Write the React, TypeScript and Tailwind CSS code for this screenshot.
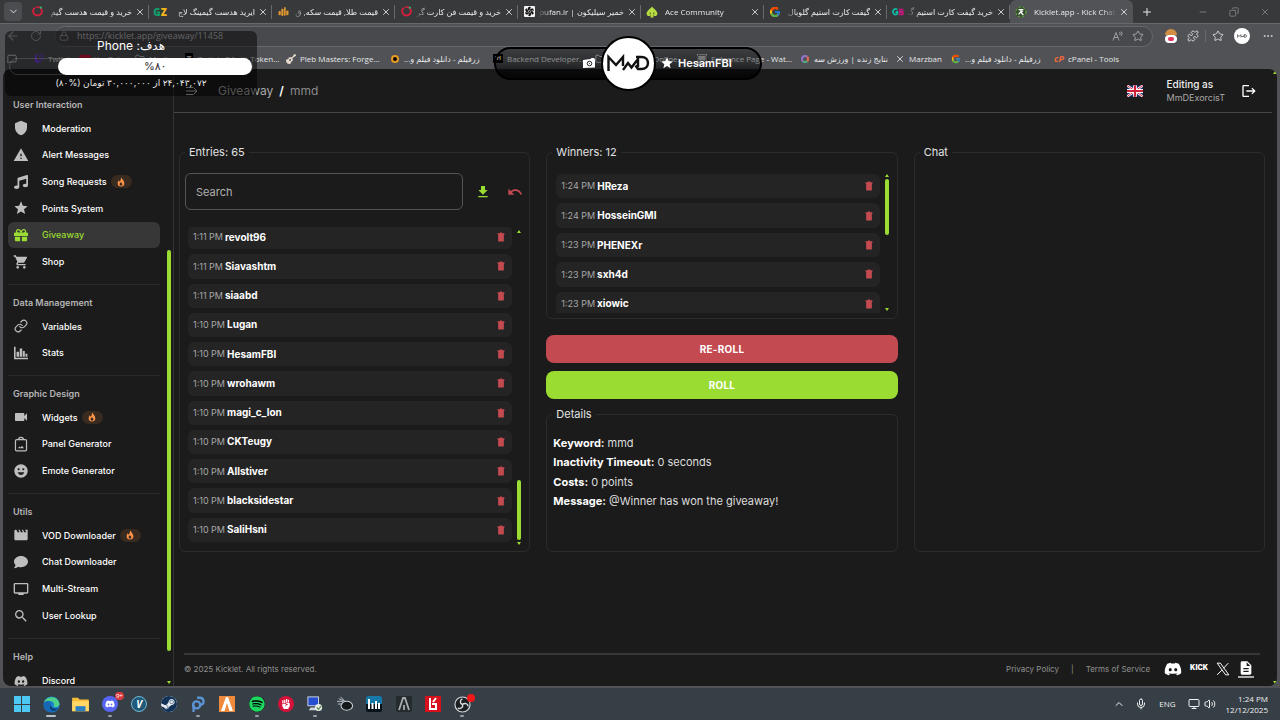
import type { ComponentType, ReactNode } from "react";
import {
  MdShield, MdWarning, MdStar, MdShoppingCart, MdVideocam, MdMovie, MdTv, MdSearch,
  MdDownload, MdUndo, MdLogout, MdDescription, MdEmojiEmotions,
} from "react-icons/md";
import { FaMusic, FaGift, FaComment, FaDiscord, FaSpotify, FaFistRaised, FaGuitar } from "react-icons/fa";
import { FcGoogle } from "react-icons/fc";
import { SiSteam, SiTwitch, SiYoutube } from "react-icons/si";
import {
  ChevronDown, ChevronUp, X, Plus, Minus, Copy, ArrowLeft, RotateCw, Lock, Star, Puzzle, Mic, Volume2,
  Link as LinkIcon, Monitor, Ellipsis, Folder, MessageSquare,
} from "lucide-react";

type IconType = ComponentType<{ className?: string }>;

const CircleLogo = ({ className = "" }) => (
  <svg viewBox="0 0 20 20" className={className}>
    <path d="M5 3a8 8 0 1 0 10 0" fill="none" stroke="#d51f3c" strokeWidth="3.4" />
    <path d="M7 3a8 8 0 0 1 8 0" fill="none" stroke="#d51f3c" strokeWidth="2.4" />
    <circle cx="16" cy="3" r="2" fill="#2bb673" />
  </svg>
);

const GzLogo = () => (
  <span className="text-[10px] font-black leading-none">
    <span className="text-[#12a06e]">G</span>
    <span className="text-[#f2b51c]">Z</span>
  </span>
);

const GsLogo = () => (
  <svg viewBox="0 0 20 20" className="size-3" fill="none" strokeWidth="3">
    <path d="M9 6a4.500 4.500 0 1 0 0 7v-3H6" stroke="#12b5a0" />
    <path d="M19 6h-6v4h5v4h-7" stroke="#c2187a" />
  </svg>
);

const CoinsLogo = ({ className = "" }) => (
  <svg viewBox="0 0 20 20" className={className} fill="#e0962f">
    <rect x="1" y="9" width="4" height="8" rx="1.5" />
    <rect x="6" y="5" width="4" height="13" rx="1.5" />
    <rect x="11" y="2" width="3" height="16" rx="1.5" />
    <rect x="15" y="8" width="4" height="9" rx="1.5" />
  </svg>
);

const FanLogo = ({ className = "" }) => (
  <svg viewBox="0 0 20 20" className={className}>
    <rect width="20" height="20" rx="2" fill="#f5f5f5" />
    <g fill="#111">
      {[0, 60, 120, 180, 240, 300].map((a) => (
        <path key={a} d="M10 9C6 8 6 4 9 1.500c2.500 0 3.500 1 3.500 2C10.500 5 10 6.500 11 8.500z" transform={`rotate(${a} 10 10)`} />
      ))}
    </g>
    <circle cx="10" cy="10" r="2" fill="#111" stroke="#f5f5f5" />
  </svg>
);

const SpadeLogo = ({ className = "" }) => (
  <svg viewBox="0 0 20 20" className={className}>
    <path d="M10 1C7 5 1 8 1 13c0 4 5 5 7.500 2.500L7 19h6l-1.500-3.500C14 18 19 17 19 13c0-5-6-8-9-12z" fill="#b7dd45" />
    <path d="M7 11v3M13 11v3" stroke="#39400f" strokeWidth="1.500" />
  </svg>
);

const KickletLogo = ({ className = "" }) => (
  <svg viewBox="0 0 20 20" className={className}>
    <circle cx="10" cy="10" r="9" fill="#36502f" />
    <circle cx="10" cy="10" r="8.500" fill="none" stroke="#6db33f" strokeWidth="1.500" strokeDasharray="4 3" />
    <path d="M6 6h8M10 6v3l-4 5M9 10l5 5M13 8l-3 3" stroke="#fff" strokeWidth="2" fill="none" />
  </svg>
);

const MmdMark = ({ className = "" }) => (
  <svg viewBox="0 0 44 20" className={className} fill="none" stroke="#111" strokeWidth="2.400">
    <path d="M2.500 18V4l7.500 8 7-8v9" />
    <path d="M17 17l5-7 3.500 4.500L32 6v8" />
    <path d="M30 4h5.500c4 0 6.500 2.500 6.500 6s-2.500 6-6.500 6H32l-2.500-3.500" />
  </svg>
);

const BarsLogo = ({ className = "" }) => (
  <svg viewBox="0 0 22 22" className={className} fill="currentColor">
    <path d="M0 1h2.500v17.500H22V21H0z" />
    <path d="M4 9h4v8H4zM9 4h4v13H9zM14 8h3v9h-3zM18 12h3v5h-3z" />
  </svg>
);

const PanelIcon = ({ className = "" }) => (
  <svg viewBox="0 0 24 26" className={className} fill="none" stroke="currentColor" strokeWidth="2">
    <rect x="3" y="6" width="18" height="18" rx="2" />
    <path d="M8 6c0-5 8-5 8 0" />
    <path d="M7 20l2.500-3 2 1.500 2-2.500 3.500 4z" fill="currentColor" stroke="none" />
  </svg>
);

const MenuIcon = ({ className = "" }) => (
  <svg viewBox="0 0 24 18" className={className} fill="none" stroke="currentColor" strokeWidth="1.800">
    <path d="M0 2h15M0 9h22M0 16h15M16 3l6 6-6 6" />
  </svg>
);

const TrashIcon = ({ className = "" }) => (
  <svg viewBox="0 0 14 16" className={className} fill="currentColor">
    <path d="M1 1.500h3.500L5.500 0h3l1 1.500H13V4H1zM2 4h10v10.500a1.500 1.500 0 0 1-1.500 1.500h-7A1.500 1.500 0 0 1 2 14.500z" />
  </svg>
);

const FlameIcon = ({ className = "" }) => (
  <svg viewBox="0 0 24 24" className={className} fill="currentColor">
    <path
      fillRule="evenodd"
      d="M13 1c1 4 7 7 7 14a8 8 0 0 1-16 0c0-4 2-6 3-8 0 2 .5 4 2 4C12 9 11 4 13 1zm-1 11c-1 2-3.500 3-3.500 5.500a3.500 3.500 0 0 0 7 0c0-2.500-2.500-3-3.500-5.500z"
    />
  </svg>
);

const CameraIcon = ({ className = "" }) => (
  <svg viewBox="0 0 26 24" className={className}>
    <path d="M1 6l15-2 2-2h5l2 3v16L1 22z" fill="#fff" />
    <circle cx="14" cy="13" r="4.500" fill="none" stroke="#222" strokeWidth="2" />
    <circle cx="14" cy="13" r="1" fill="#222" />
  </svg>
);

const XLogo = ({ className = "" }) => (
  <svg viewBox="0 0 24 24" className={className} fill="none" stroke="currentColor" strokeWidth="1.700">
    <path d="M2 2h5.500L22 22h-5.500zM21 2l-8.500 9M10 14l-8 8" />
  </svg>
);

const UkFlag = () => (
  <svg viewBox="0 0 34 24" className="h-3 w-4">
    <rect width="34" height="24" fill="#20306f" />
    <path d="M0 0l34 24M34 0L0 24" stroke="#fff" strokeWidth="5" />
    <path d="M0 0l34 24M34 0L0 24" stroke="#d0203a" strokeWidth="2" />
    <path d="M17 0v24M0 12h34" stroke="#fff" strokeWidth="8" />
    <path d="M17 0v24M0 12h34" stroke="#d0203a" strokeWidth="4.500" />
  </svg>
);

type Tab = { icon: ReactNode; title: string; rtl?: boolean; active?: boolean };
const tabs: Tab[] = [
  { icon: <CircleLogo className="size-[11px]" />, title: "خرید و قیمت هدست گیم", rtl: true },
  { icon: <GzLogo />, title: "ایرید هدست گیمینگ لاج", rtl: true },
  { icon: <CoinsLogo className="size-[11px]" />, title: "قیمت طلا, قیمت سکه, ق", rtl: true },
  { icon: <CircleLogo className="size-[11px]" />, title: "خرید و قیمت فن کارت گر", rtl: true },
  { icon: <FanLogo className="size-[11px]" />, title: "خمیر سیلیکون | pufan.ir", rtl: true },
  { icon: <SpadeLogo className="size-3" />, title: "Ace Community" },
  { icon: <FcGoogle className="size-3" />, title: "گیفت کارت استیم گلوبال", rtl: true },
  { icon: <GsLogo />, title: "خرید گیفت کارت استیم گ", rtl: true },
  { icon: <KickletLogo className="size-3" />, title: "Kicklet.app - Kick Chatb", active: true },
];

function TabStrip() {
  return (
    <div className="flex h-[23px] items-center bg-[#37393b] pl-1">
      <button aria-label="Tab actions" className="flex h-[19px] w-[18px] shrink-0 items-center justify-center rounded bg-[#4b4d50]">
        <ChevronDown className="size-[11px]" />
      </button>
      <div className="ml-1 flex h-full min-w-0 flex-1 items-center">
        {tabs.map((t, i) => (
          <div
            key={i}
            className={`flex h-full max-w-[123px] min-w-0 flex-1 items-center gap-[3px] pl-[5px] ${t.active ? "rounded-t-md bg-[#515357]" : ""}`}
          >
            <span className="flex w-3 shrink-0 justify-center">{t.icon}</span>
            <span
              dir={t.rtl ? "rtl" : "ltr"}
              className={`min-w-0 flex-1 overflow-hidden text-[8px] whitespace-nowrap ${t.rtl ? "mask-l-from-85%" : "pl-1 mask-r-from-85%"}`}
            >
              {t.title}
            </span>
            <button aria-label="Close tab" className="shrink-0"><X className="size-2.5" /></button>
            <span className={`h-3.5 w-px shrink-0 ${t.active ? "" : "bg-[#66686b]"}`} />
          </div>
        ))}
        <button aria-label="New tab" className="ml-2"><Plus className="size-3" /></button>
      </div>
      <div className="flex w-[82px] shrink-0 justify-between pr-[10px] text-[#85878a]">
        <Minus className="size-2.5" />
        <Copy className="size-2.5 -scale-x-100" />
        <X className="size-2.5" />
      </div>
    </div>
  );
}

function Toolbar() {
  return (
    <div className="flex h-[25px] items-center border-t border-[#66686c] bg-[#505256] pr-1.5 pl-1.5 text-[#a5a7aa]">
      <button aria-label="Back"><ArrowLeft className="size-3.5" /></button>
      <button aria-label="Refresh" className="ml-2.5"><RotateCw className="size-3" /></button>
      <div className="ml-3 flex h-[21px] min-w-0 flex-1 items-center gap-2 rounded-full border border-[#66686c] bg-[#48494d] px-1">
        <Lock className="size-2.5" />
        <input aria-label="Address" defaultValue="https://kicklet.app/giveaway/11458" className="min-w-0 flex-1 bg-transparent text-[9px] text-[#c4c5c8] outline-none" />
        <svg viewBox="0 0 22 20" className="h-2.5 w-3" fill="none" stroke="currentColor" strokeWidth="1.800">
          <path d="M1 19L7 3l6 16M3 13h8M14 2q3 3 0 6M17 1q5 4 0 9" />
        </svg>
        <Star className="mr-1 size-3" />
      </div>
      <span className="ml-3 flex flex-col items-center">
        <span className="h-1.5 w-3 rounded-t-full bg-[#d28e42]" />
        <span className="flex h-2 w-3 items-center justify-center rounded-sm bg-white"><span className="h-1 w-1.5 rounded-full bg-[#e3345f]" /></span>
      </span>
      <Puzzle className="ml-2.5 size-3 text-[#d2d3d5]" />
      <span className="ml-1.5 h-3 w-px bg-[#66686c]" />
      <Star className="ml-1.5 size-3 text-[#d2d3d5]" />
      <span className="ml-2.5 flex size-4 items-center justify-center rounded-full bg-white"><MmdMark className="h-1.5 w-2.5" /></span>
      <Ellipsis className="ml-3 size-3 text-[#d2d3d5]" />
    </div>
  );
}

type Bookmark = { icon: ReactNode; label: string; width: string; rtl?: boolean };
const bookmarks: Bookmark[] = [
  { icon: <SiTwitch className="size-2.5 text-[#7b3fe4]" />, label: "Twitch", width: "w-[46px]" },
  { icon: <SiYoutube className="size-3 text-[#d9183b]" />, label: "YouTube", width: "w-[55px]" },
  { icon: <Folder className="size-2.5" />, label: "Media", width: "w-[49px]" },
  { icon: <b className="bg-black px-0.5 text-[8px]">T</b>, label: "Twitch OAuth Token...", width: "w-[102px]" },
  { icon: <FaGuitar className="size-2.5 text-[#e3d9cb]" />, label: "Pleb Masters: Forge...", width: "w-[104px]" },
  { icon: <span className="flex size-2 items-center justify-center rounded-full border-2 border-[#e79a25] bg-black" />, label: "زرفیلم - دانلود فیلم و...", width: "w-[103px]", rtl: true },
  { icon: <span className="bg-black px-0.5 text-[6px] font-bold">iH</span>, label: "Backend Developer...", width: "w-[102px]" },
  { icon: <Folder className="size-2.5" />, label: "Watch Free Online...", width: "w-[102px]" },
  { icon: <Monitor className="size-2.5 bg-[#bcbdbf] text-[#333]" />, label: "Entrance Page - Wat...", width: "w-[103px]" },
  { icon: <span className="size-2 rounded-full border-2 border-[#8f72c8] border-r-[#e36b4c] border-b-[#4fae7f]" />, label: "نتایج زنده | ورزش سه", width: "w-[95px]", rtl: true },
  { icon: <X className="size-2.5" />, label: "Marzban", width: "w-[56px]" },
  { icon: <FcGoogle className="size-2.5" />, label: "زرفیلم - دانلود فیلم و...", width: "w-[103px]", rtl: true },
  { icon: <b className="text-[9px] text-[#f26a3a] italic">cP</b>, label: "cPanel - Tools", width: "w-[80px]" },
];

function BookmarkBar() {
  return (
    <nav className="flex h-[21px] items-center overflow-hidden bg-[#505256] pl-[7px] text-[#e6e7e8]">
      <MessageSquare className="mr-4 size-2.5 shrink-0" />
      {bookmarks.map((b, i) => (
        <a key={i} href="#" className={`flex shrink-0 items-center gap-[3px] ${b.width}`}>
          <span className="flex w-3 shrink-0 justify-center">{b.icon}</span>
          <span dir={b.rtl ? "rtl" : "ltr"} className="text-[8px] whitespace-nowrap">{b.label}</span>
        </a>
      ))}
    </nav>
  );
}

const Fire = () => (
  <span className="flex h-[13px] w-[21px] items-center justify-center rounded-full bg-[#3a2b20]">
    <FlameIcon className="size-2.5 text-[#ff9548]" />
  </span>
);

type NavItem = { icon: IconType; label: string; hot?: boolean; active?: boolean; small?: boolean };
const sections: { title: string; height: string; items: NavItem[] }[] = [
  {
    title: "User Interaction",
    height: "h-[160px]",
    items: [
      { icon: MdShield, label: "Moderation" },
      { icon: MdWarning, label: "Alert Messages" },
      { icon: FaMusic, label: "Song Requests", hot: true, small: true },
      { icon: MdStar, label: "Points System" },
      { icon: FaGift, label: "Giveaway", active: true, small: true },
      { icon: MdShoppingCart, label: "Shop" },
    ],
  },
  {
    title: "Data Management",
    height: "h-[53px]",
    items: [
      { icon: LinkIcon, label: "Variables", small: true },
      { icon: BarsLogo, label: "Stats", small: true },
    ],
  },
  {
    title: "Graphic Design",
    height: "h-[80px]",
    items: [
      { icon: MdVideocam, label: "Widgets", hot: true },
      { icon: PanelIcon, label: "Panel Generator" },
      { icon: MdEmojiEmotions, label: "Emote Generator" },
    ],
  },
  {
    title: "Utils",
    height: "h-[107px]",
    items: [
      { icon: MdMovie, label: "VOD Downloader", hot: true },
      { icon: FaComment, label: "Chat Downloader", small: true },
      { icon: MdTv, label: "Multi-Stream" },
      { icon: MdSearch, label: "User Lookup" },
    ],
  },
  { title: "Help", height: "h-[27px]", items: [{ icon: FaDiscord, label: "Discord", small: true }] },
];

const Up = () => <span className="size-0 border-x-2 border-b-3 border-x-transparent border-b-[#9bdc33]" />;
const Down = () => <span className="size-0 border-x-2 border-t-3 border-x-transparent border-t-[#9bdc33]" />;

function Sidebar() {
  return (
    <aside className="flex w-[171px] shrink-0 overflow-hidden border-r border-[#343434]">
      <nav className="h-0 min-h-full w-[157px] overflow-hidden pt-7 pl-[5px]">
        {sections.map((s, i) => (
          <section key={s.title} className={`pb-[9px] ${i ? "border-t border-[#292929] pt-2.5" : ""}`}>
            <h2 className="mb-0.5 flex h-4 items-center pl-[5px] text-[9px] font-semibold text-[#b5b5b5]">{s.title}</h2>
            <ul className={`flex flex-col ${s.height}`}>
              {s.items.map((it) => (
                <li key={it.label} className="flex min-h-0 flex-1">
                  <a
                    href="#"
                    className={`flex w-full items-center rounded-md pl-[5px] text-[9px] font-medium ${it.active ? "bg-[#373737] text-[#9bdc33]" : "text-white"}`}
                  >
                    <span className={`mr-[13px] flex w-4 justify-center ${it.active ? "" : "text-[#bebebe]"}`}>
                      <it.icon className={it.small ? "size-3.5" : "size-4"} />
                    </span>
                    <span className="mr-1">{it.label}</span>
                    {it.hot && <Fire />}
                  </a>
                </li>
              ))}
            </ul>
          </section>
        ))}
      </nav>
      <div className="flex flex-1 flex-col items-center pt-[181px] pb-0.5 pl-1">
        <span className="h-[401px] w-1 rounded-full bg-[#9bdc33]" />
        <span className="flex-1" />
        <Down />
      </div>
    </aside>
  );
}

function Row({ time, name }: { time: string; name: string }) {
  return (
    <li className="flex min-h-0 flex-1 items-center rounded-md bg-[#242424] px-[5px] text-[10px]">
      <span className="mr-0.5 text-[9px] text-[#a8a8a8]">{time}</span>
      <b className="flex-1 font-bold text-white">{name}</b>
      <button aria-label={`Remove ${name}`} className="px-0.5"><TrashIcon className="h-2.5 w-2 text-[#c44a52]" /></button>
    </li>
  );
}

const entries = [
  ["1:11 PM", "revolt96"], ["1:11 PM", "Siavashtm"], ["1:11 PM", "siaabd"], ["1:10 PM", "Lugan"],
  ["1:10 PM", "HesamFBI"], ["1:10 PM", "wrohawm"], ["1:10 PM", "magi_c_lon"], ["1:10 PM", "CKTeugy"],
  ["1:10 PM", "Allstiver"], ["1:10 PM", "blacksidestar"], ["1:10 PM", "SaliHsni"],
];
const winners = [
  ["1:24 PM", "HReza"], ["1:24 PM", "HosseinGMI"], ["1:23 PM", "PHENEXr"], ["1:23 PM", "sxh4d"], ["1:23 PM", "xiowic"],
];
const details = [
  ["Keyword:", "mmd"], ["Inactivity Timeout:", "0 seconds"], ["Costs:", "0 points"], ["Message:", "@Winner has won the giveaway!"],
];

const fieldset = "min-w-0 rounded-md border border-[#2c2c2c]";
const legend = "ml-[5px] px-1 text-[11px] leading-4 text-[#e2e2e2]";

function Content() {
  return (
    <div className="grid grid-cols-3 gap-4 pt-[31px] pr-[7px] pl-[5px]">
      <fieldset className={`${fieldset} h-[408px]`}>
        <legend className={legend}>Entries: 65</legend>
        <div className="mt-[13px] flex items-center pr-1.5 pl-[5px]">
          <input
            aria-label="Search"
            placeholder="Search"
            className="h-[37px] min-w-0 flex-1 rounded-md border border-[#555] bg-transparent px-2.5 text-[11px] outline-none placeholder:text-[#b0b0b0]"
          />
          <button aria-label="Download entries" className="ml-3 text-[#9bdc33]"><MdDownload className="size-4" /></button>
          <button aria-label="Reset entries" className="ml-4 text-[#c44a52]"><MdUndo className="size-4" /></button>
        </div>
        <div className="mt-[17px] flex h-[318px] pr-[7px] pl-2">
          <div className="flex min-w-0 flex-1 flex-col justify-end overflow-hidden pb-[3px]">
            <ul className="flex h-[317px] shrink-0 flex-col gap-[5px]">
              {entries.map(([t, n]) => <Row key={n} time={t} name={n} />)}
            </ul>
          </div>
          <div className="ml-1 flex w-1.5 flex-col items-center pt-[3px]">
            <Up />
            <span className="flex-1" />
            <span className="mb-0.5 h-[60px] w-1 rounded-full bg-[#9bdc33]" />
            <Down />
          </div>
        </div>
      </fieldset>

      <div className="flex min-w-0 flex-col">
        <fieldset className={`${fieldset} h-[175px]`}>
          <legend className={legend}>Winners: 12</legend>
          <div className="mt-3.5 flex h-[139px] pr-[7px] pl-[9px]">
            <div className="min-w-0 flex-1 overflow-hidden">
              <ul className="flex h-[142px] flex-col gap-[5px]">
                {winners.map(([t, n]) => <Row key={n} time={t} name={n} />)}
              </ul>
            </div>
            <div className="ml-1 flex w-1.5 flex-col items-center pb-0.5">
              <Up />
              <span className="mt-0.5 h-[56px] w-1 rounded-full bg-[#9bdc33]" />
              <span className="flex-1" />
              <Down />
            </div>
          </div>
        </fieldset>
        <button className="mt-4 h-7 rounded-lg bg-[#c44a52] text-[10px] font-bold tracking-wide text-white">RE-ROLL</button>
        <button className="mt-2 h-7 rounded-lg bg-[#9bdc33] text-[10px] font-bold tracking-wide text-white">ROLL</button>
        <fieldset className={`${fieldset} mt-[7px] flex-1`}>
          <legend className={legend}>Details</legend>
          <dl className="mt-[11px] flex h-[78px] flex-col px-1.5 text-[11px]">
            {details.map(([k, v]) => (
              <div key={k} className="flex flex-1 items-center gap-[3px]">
                <dt className="font-bold text-white">{k}</dt>
                <dd className="text-[#dedede]">{v}</dd>
              </div>
            ))}
          </dl>
        </fieldset>
      </div>

      <fieldset className={fieldset}>
        <legend className={legend}>Chat</legend>
      </fieldset>
    </div>
  );
}

function Kicklet() {
  return (
    <div className="mx-[3px] flex min-h-0 flex-1 overflow-hidden rounded-lg bg-[#1b1b1b]">
      <Sidebar />
      <div className="flex min-w-0 flex-1 flex-col">
        <header className="flex h-11 shrink-0 items-center border-b border-[#454545] pr-[15px] pl-3 text-[12px] text-[#a8a8a8]">
          <button aria-label="Toggle menu" className="mr-5 text-[#cfcfcf]"><MenuIcon className="h-2.5 w-3" /></button>
          <a href="#">Giveaway</a>
          <span className="mx-1.5 font-semibold text-white">/</span>
          <span className="flex-1 text-[#8a8a8a]">mmd</span>
          <UkFlag />
          <div className="mr-4 ml-6 leading-[14px]">
            <p className="text-[10px] font-medium text-[#efefef]">Editing as</p>
            <p className="text-[9px] leading-[13px] text-[#a8a8a8]">MmDExorcisT</p>
          </div>
          <button aria-label="Log out" className="text-white"><MdLogout className="size-4" /></button>
        </header>
        <main className="min-h-0 flex-1">
          <Content />
        </main>
        <footer className="mr-3 ml-2.5 flex h-[33px] shrink-0 items-center border-t-2 border-[#383838] pr-1.5 pb-1 text-[8px] text-[#909090]">
          <span className="flex-1">© 2025 Kicklet. All rights reserved.</span>
          <a href="#">Privacy Policy</a>
          <span className="mx-3">|</span>
          <a href="#" className="mr-3.5">Terms of Service</a>
          <div className="flex items-center gap-2 text-white">
            <a href="#" aria-label="Discord"><FaDiscord className="size-[18px]" /></a>
            <a href="#" className="text-[7px] font-black">KICK</a>
            <a href="#" aria-label="X"><XLogo className="size-3.5" /></a>
            <a href="#" aria-label="Documentation" className="border-b-2 border-[#aaa]"><MdDescription className="size-4" /></a>
          </div>
        </footer>
      </div>
      <div className="flex w-[5px] flex-col items-center justify-between py-0.5"><Up /><Down /></div>
    </div>
  );
}

const WindowsLogo = () => (
  <span className="grid size-4 grid-cols-2 gap-px">
    {[0, 1, 2, 3].map((n) => <span key={n} className="bg-[#4cc8f4]" />)}
  </span>
);

const EdgeLogo = () => (
  <svg viewBox="0 0 20 20" className="size-[17px]">
    <circle cx="10" cy="10" r="9.500" fill="#1c7fd0" />
    <path d="M1 8C3 0 17-2 19.500 9c0 4-6 5-7 3 2-4-2-7-6-6-3 .5-4.500 1-5.500 2z" fill="#4fd08a" />
    <path d="M1 8c4-4 9-2 8 1-3 3-2 8 4 9-6 3-13-2-12-10z" fill="#1668b5" />
    <path d="M9 9c-1 4 4 7 9 5-2 3-5 4-7 3-3-1-4-5-2-8z" fill="#0e3d73" />
  </svg>
);

const task = "flex size-4 items-center justify-center";
const taskIcons: { label: string; node: ReactNode; open?: boolean }[] = [
  { label: "Start", node: <WindowsLogo /> },
  { label: "Edge", node: <EdgeLogo /> },
  { label: "Files", node: <svg viewBox="0 0 20 18" className="h-[15px] w-[17px]"><path d="M0 1h7l2 2h11v14H0z" fill="#f6bd3a" /><path d="M0 5h20v12H0z" fill="#ffd766" /><path d="M4 11h12v6H4z" fill="#2a7fc4" /></svg> },
  { label: "Discord", node: <span className={`${task} relative rounded-full bg-[#5865f2]`}><FaDiscord className="size-2.5 text-white" /><span className="absolute -top-1 -right-1.5 rounded-full bg-[#d83a3f] px-px text-[6px] leading-[8px] text-white">9+</span></span>, open: true },
  { label: "V2Ray", node: <span className={`${task} rounded-full border border-[#6fb8d6] bg-[#205a78] text-[10px] font-bold text-white italic`}>V</span> },
  { label: "Steam", node: <span className={`${task} rounded-full bg-[#e8edf2]`}><SiSteam className="size-4 text-[#123258]" /></span> },
  { label: "Player", node: <svg viewBox="0 0 18 18" className="size-4" fill="none" stroke="#5b94d6" strokeWidth="2.600"><circle cx="7.500" cy="10" r="4" /><path d="M4 10v8M8 2h3c5 0 6 7 1 8" /></svg>, open: true },
  { label: "FiveM", node: <svg viewBox="0 0 16 16" className="size-4"><rect width="16" height="16" fill="#f08a3c" /><path d="M2 15L7 1h2l5 14h-3.500L8 7l-2.500 8z" fill="#fff" /></svg> },
  { label: "Spotify", node: <span className={`${task} rounded-full bg-black`}><FaSpotify className="size-4 text-[#1ed760]" /></span>, open: true },
  { label: "Riot Client", node: <span className={`${task} rounded-full bg-[#d5133a]`}><FaFistRaised className="size-2.5 text-white" /></span> },
  { label: "Remote Desktop", node: <svg viewBox="0 0 18 18" className="size-4"><rect x="1" y="1" width="12" height="10" fill="#254ed0" stroke="#d9dfea" /><path d="M4 13h7v3H2z" fill="#cfd5df" /><circle cx="13" cy="13" r="4" fill="#e8ebe8" /><path d="M11 13l2 2 3-4" stroke="#66925a" fill="none" strokeWidth="1.500" /></svg>, open: true },
  { label: "Meteor", node: <svg viewBox="0 0 18 18" className="size-4"><ellipse cx="11" cy="11" rx="6.500" ry="5" fill="#15191c" stroke="#c7cdd1" strokeWidth="1.200" /><path d="M0 6h7M2 3l7 3M1 9h5M4 1l4 4" stroke="#c7cdd1" /></svg> },
  { label: "Mixer", node: <svg viewBox="0 0 16 16" className="size-4"><rect width="16" height="16" rx="2" fill="#08131b" /><path d="M0 2q0-2 2-2h12q2 0 2 2v6H0z" fill="#1679a8" /><path d="M3 3v10M6.500 7v6M10 5v8M13 7v6" stroke="#fff" strokeWidth="2" /></svg> },
  { label: "Arena", node: <svg viewBox="0 0 16 16" className="size-4"><rect width="16" height="16" rx="2" fill="#252a2d" /><path d="M3 14L7 2h2l4 12M8 9v5" stroke="#a5acaf" strokeWidth="1.800" fill="none" /></svg> },
  { label: "Game", node: <svg viewBox="0 0 16 16" className="size-4"><rect width="16" height="16" fill="#d6101c" /><path d="M5 2v11h6V8H7M11 2L8 6" stroke="#fff" strokeWidth="2" fill="none" /></svg> },
  { label: "OBS", node: <span className="relative"><svg viewBox="0 0 18 18" className="size-[17px]"><circle cx="9" cy="9" r="8" fill="#1c1f22" stroke="#d7dadc" strokeWidth="1.200" /><g fill="none" stroke="#d7dadc" strokeWidth="1.500"><path d="M9 9c-3-1-3-5 0-6M9 9c2-2 6-1 6 2M9 9c1 3-2 5-5 4" /></g></svg><span className="absolute -top-0.5 -right-1 size-2 rounded-full bg-[#f01818]" /></span>, open: true },
];

function Taskbar() {
  return (
    <div className="flex h-8 shrink-0 items-center bg-[#363f45] pr-3 pl-[7px]">
      <div className="flex h-full w-[470px]">
        {taskIcons.map((t) => (
          <button key={t.label} aria-label={t.label} className="flex flex-1 flex-col items-center pt-2">
            <span className="flex h-4 items-center">{t.node}</span>
            <span className={`mt-[3px] h-0.5 rounded-full ${t.label === "Edge" ? "w-2.5 bg-[#b8c4ca]" : t.open ? "w-1 bg-[#98a0a5]" : ""}`} />
          </button>
        ))}
      </div>
      <div className="ml-auto flex items-center text-[#f0f1f2]">
        <ChevronUp className="size-3" />
        <Mic className="ml-2.5 size-3" />
        <span className="mx-3 text-[8px]">ENG</span>
        <Monitor className="size-3" />
        <Volume2 className="mr-2.5 ml-1 size-3" />
        <div className="text-right text-[8px] leading-[11px]">
          <p>1:24 PM</p>
          <p>12/12/2025</p>
        </div>
      </div>
    </div>
  );
}

function GoalWidget() {
  return (
    <div dir="rtl" className="absolute top-[31px] left-[5px] h-[65px] w-[252px] rounded-md bg-black/50 px-1 pt-[5px] text-center text-white">
      <p className="text-[12px] leading-[19px]">هدف: Phone</p>
      <div className="mt-[3px] flex h-[17px] rounded-full border border-white/15">
        <div className="-my-px h-[17px] w-[80%] rounded-full bg-white text-[11px] leading-[17px] text-[#333]">%۸۰</div>
      </div>
      <p className="text-[9px] leading-[15px] whitespace-nowrap text-[#e8e8e8]">۲۴,۰۴۳,۰۷۲ از ۳۰,۰۰۰,۰۰۰ تومان (%۸۰)</p>
    </div>
  );
}

function AlertPill() {
  return (
    <div className="absolute top-[35px] left-1/2 flex h-[56px] w-[268px] -translate-x-[146px] items-center justify-center">
      <div className="flex h-[33px] w-full items-center rounded-full border-2 border-black bg-linear-to-b from-black/25 via-black/45 to-black/80">
        <div className="flex flex-1 justify-end pr-1.5"><CameraIcon className="h-3 w-3.5" /></div>
        <div className="w-[54px]" />
        <div className="flex flex-1 items-center gap-1 pl-1 text-[11px] font-semibold text-white">
          <MdStar className="size-3.5 shrink-0" />HesamFBI
        </div>
      </div>
      <div className="absolute flex size-[55px] items-center justify-center rounded-full border-2 border-black bg-white">
        <MmdMark className="h-5 w-11" />
      </div>
    </div>
  );
}

export default function App() {
  return (
    <div className="relative flex h-screen min-h-[720px] flex-col overflow-hidden bg-[#505256] font-['Inter','DejaVu_Sans',sans-serif] text-[#e9e9ea]">
      <div className="shrink-0 font-['Open_Sans','DejaVu_Sans',sans-serif]">
        <TabStrip />
        <Toolbar />
        <BookmarkBar />
      </div>
      <Kicklet />
      <div className="mt-0.5 shrink-0 font-['Open_Sans',sans-serif]"><Taskbar /></div>
      <GoalWidget />
      <AlertPill />
    </div>
  );
}
